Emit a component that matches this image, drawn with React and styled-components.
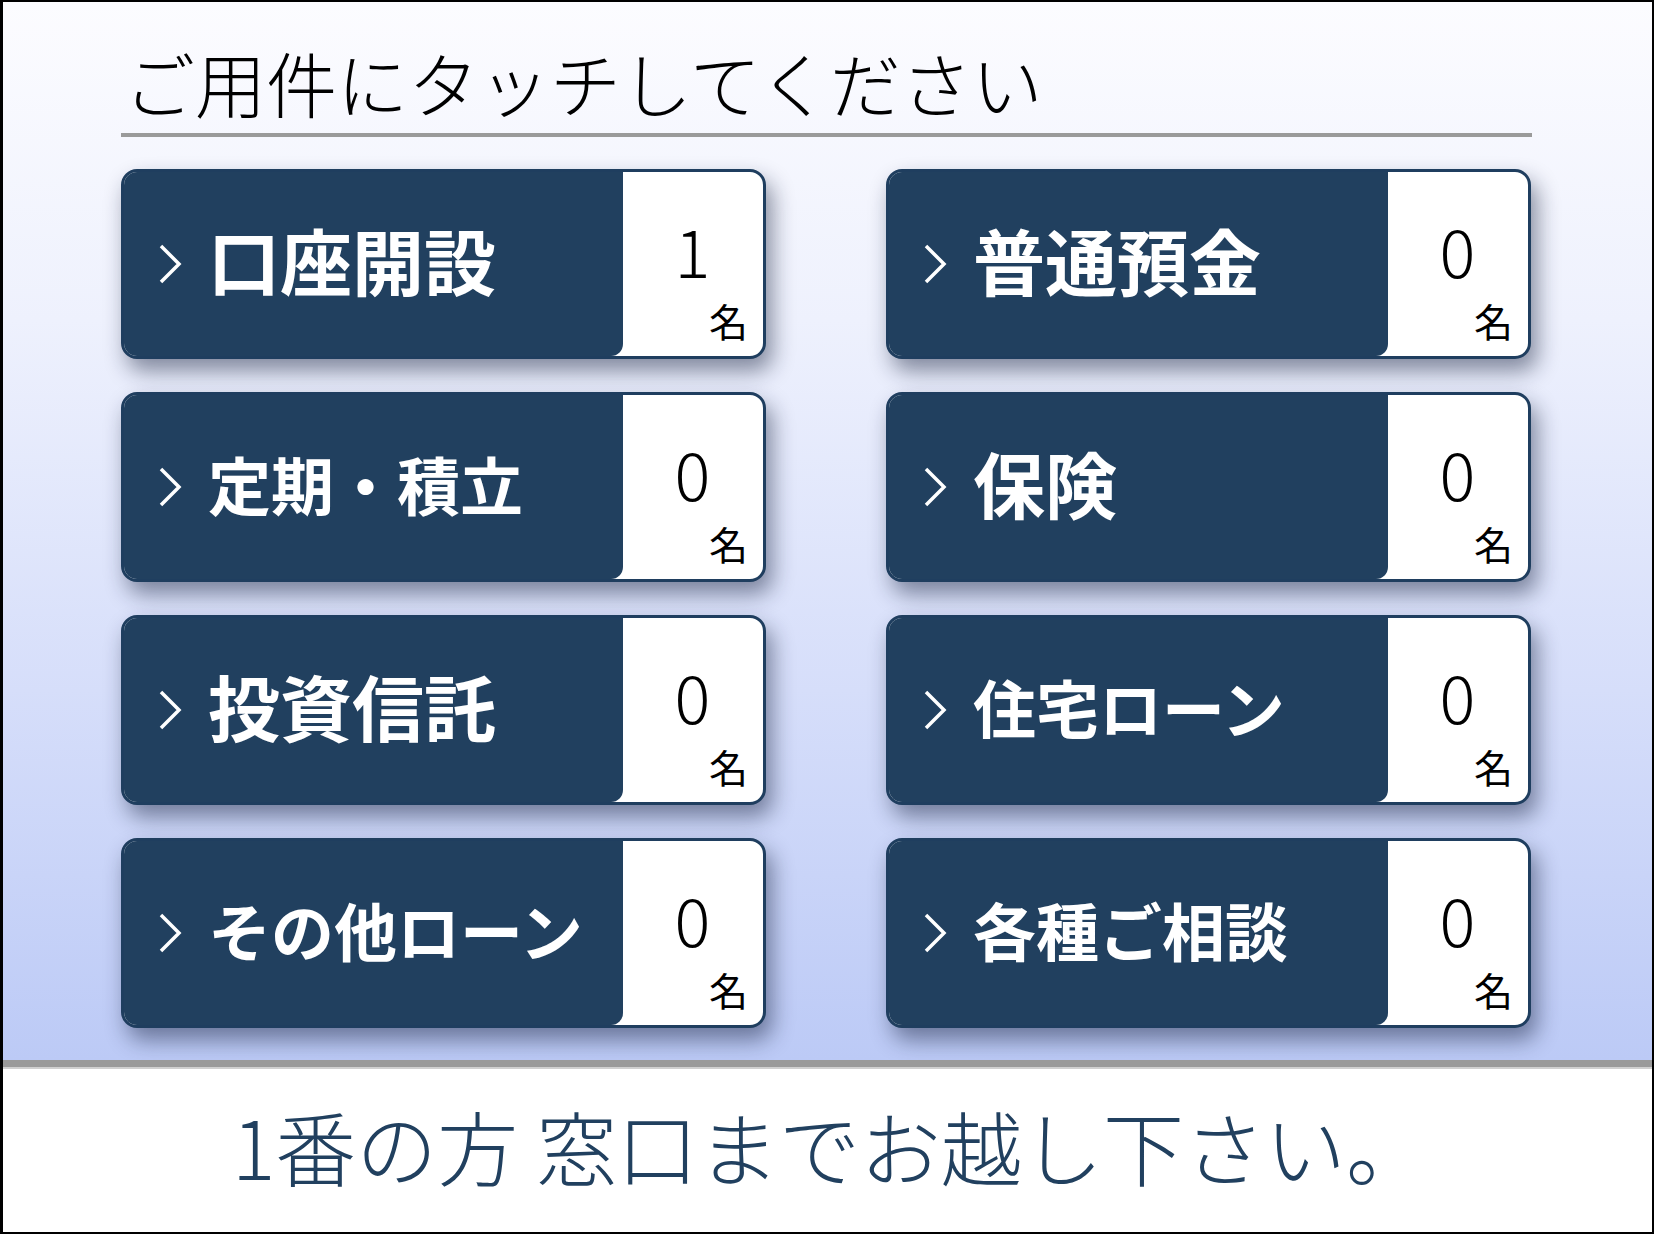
import styled, { createGlobalStyle } from "styled-components";

const GlobalStyle = createGlobalStyle`
  html, body {
    margin: 0;
    padding: 0;
    background: #ffffff;
  }
  * {
    box-sizing: border-box;
  }
`;

const NAVY = "#21405f";

// longer labels get a smaller face so they fit beside the count box
const menus = [
  { label: "口座開設", count: 1 },
  { label: "普通預金", count: 0 },
  { label: "定期・積立", count: 0 },
  { label: "保険", count: 0 },
  { label: "投資信託", count: 0 },
  { label: "住宅ローン", count: 0 },
  { label: "その他ローン", count: 0 },
  { label: "各種ご相談", count: 0 },
];

function Chevron() {
  return (
    <ChevronIcon viewBox="0 0 24 40" width="24" height="40">
      <polyline points="3,2 21,20 3,38" fill="none" stroke="#ffffff" strokeWidth="3.5" />
    </ChevronIcon>
  );
}

function MenuCard({ label, count }) {
  return (
    <Card>
      <Label>
        <Chevron />
        <LabelText $size={label.length > 4 ? 63 : 72}>{label}</LabelText>
      </Label>
      <Count>
        <Number>{count}</Number>
        <Unit>名</Unit>
      </Count>
    </Card>
  );
}

export default function App() {
  return (
    <>
      <GlobalStyle />
      <Screen>
        <Board>
          <Title>ご用件にタッチしてください</Title>
          <Rule />
          <MenuGrid>
            {menus.map((m) => (
              <MenuCard key={m.label} label={m.label} count={m.count} />
            ))}
          </MenuGrid>
        </Board>
        <Footer>
          <Notice>1番の方 窓口までお越し下さい。</Notice>
        </Footer>
      </Screen>
    </>
  );
}

const Screen = styled.div`
  width: 1654px;
  height: 1234px;
  border: 2px solid #000;
  border-left-width: 3px;
  display: flex;
  flex-direction: column;
  font-family: "Noto Sans CJK JP", "Noto Sans", sans-serif;
  overflow: hidden;
`;

const Board = styled.div`
  height: 1058px;
  flex: none;
  padding: 44px 120px 0 118px;
  background: linear-gradient(180deg, #fcfcff 0%, #eef1fd 30%, #d6defa 65%, #bccaf6 100%);
`;

const Title = styled.h1`
  margin: 0;
  padding-left: 3px;
  font-size: 71px;
  line-height: 1;
  font-weight: 300;
  color: #000;
`;

const Rule = styled.div`
  height: 4px;
  margin-top: 16px;
  background: #9a9a9a;
`;

const MenuGrid = styled.div`
  margin-top: 32px;
  display: grid;
  grid-template-columns: 645px 645px;
  column-gap: 120px;
  row-gap: 33px;
`;

const Card = styled.div`
  height: 190px;
  display: grid;
  grid-template-columns: 1fr 140px;
  background: #ffffff;
  border: 3px solid #1f3e5f;
  border-radius: 16px;
  overflow: hidden;
  box-shadow: 6px 12px 22px rgba(15, 25, 55, 0.48);
`;

const Label = styled.div`
  display: flex;
  align-items: center;
  gap: 26px;
  padding-left: 34px;
  background: ${NAVY};
  border-bottom-right-radius: 12px;
`;

const ChevronIcon = styled.svg`
  flex: none;
  display: block;
`;

const LabelText = styled.span`
  color: #ffffff;
  font-size: ${(p) => p.$size}px;
  font-weight: 700;
  line-height: 1;
  padding-bottom: 10px;
  white-space: nowrap;
`;

const Count = styled.div`
  display: flex;
  flex-direction: column;
  padding: 43px 15px 16px 0;
`;

const Number = styled.div`
  align-self: center;
  padding-left: 14px;
  font-size: 67px;
  font-weight: 300;
  line-height: 1;
  color: #000;
`;

const Unit = styled.div`
  margin-top: auto;
  align-self: flex-end;
  font-size: 39px;
  line-height: 1;
  color: #000;
`;

const Footer = styled.div`
  flex: 1;
  display: flex;
  align-items: center;
  justify-content: center;
  border-top: 7px solid #9a9a9a;
  box-shadow: inset 0 2px 0 #d0d0d0;
  background: #ffffff;
`;

const Notice = styled.div`
  font-size: 81px;
  font-weight: 300;
  line-height: 1;
  color: ${NAVY};
  padding: 0 0 10px 4px;
`;
